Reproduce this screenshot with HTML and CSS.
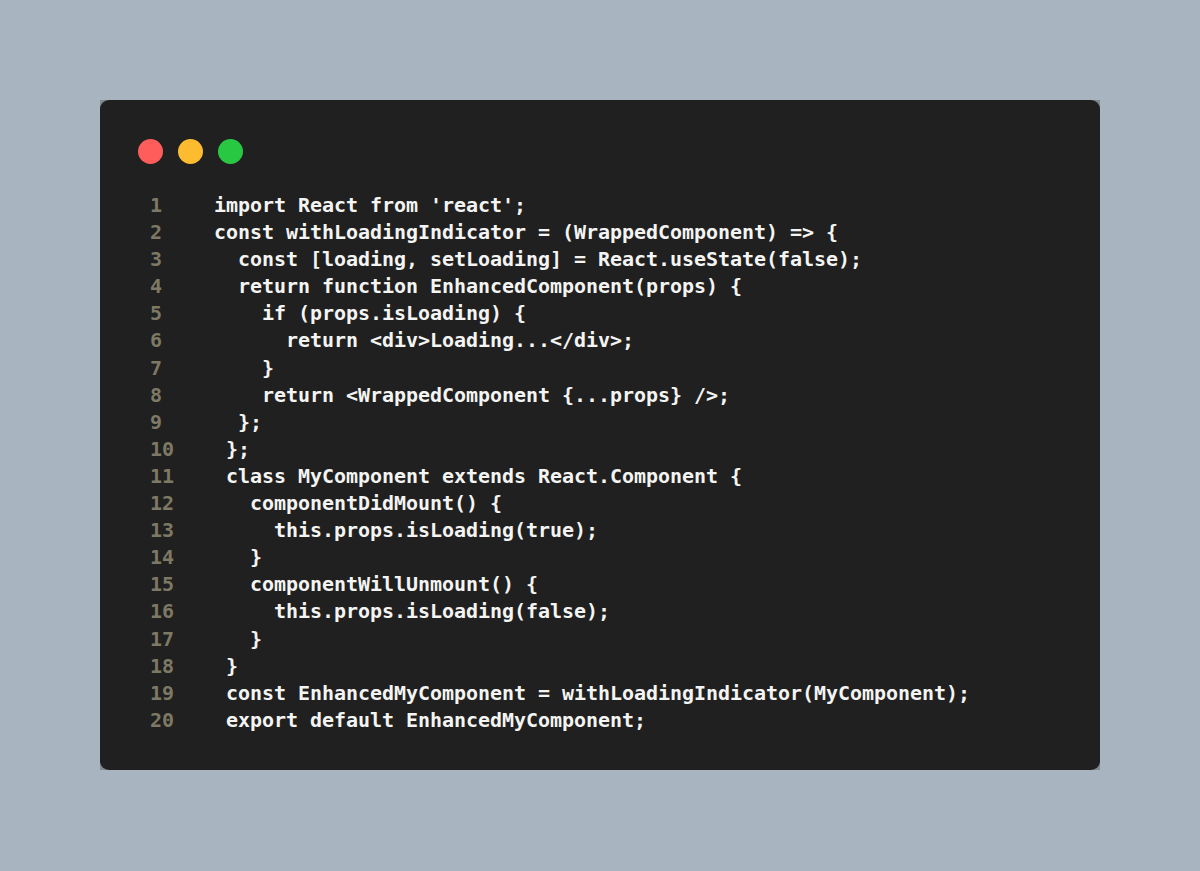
FILE: index.html
```html
<!DOCTYPE html>
<html>
<head>
<meta charset="utf-8">
<link rel="stylesheet" href="styles.css">
</head>
<body>
<div class="frame">
  <div class="card">
    <div class="dots">
      <span class="dot red"></span>
      <span class="dot yellow"></span>
      <span class="dot green"></span>
    </div>
    <div class="code">
      <div class="line"><span class="num">1</span><span class="src">import React from 'react';</span></div>
      <div class="line"><span class="num">2</span><span class="src">const withLoadingIndicator = (WrappedComponent) =&gt; {</span></div>
      <div class="line"><span class="num">3</span><span class="src">  const [loading, setLoading] = React.useState(false);</span></div>
      <div class="line"><span class="num">4</span><span class="src">  return function EnhancedComponent(props) {</span></div>
      <div class="line"><span class="num">5</span><span class="src">    if (props.isLoading) {</span></div>
      <div class="line"><span class="num">6</span><span class="src">      return &lt;div&gt;Loading...&lt;/div&gt;;</span></div>
      <div class="line"><span class="num">7</span><span class="src">    }</span></div>
      <div class="line"><span class="num">8</span><span class="src">    return &lt;WrappedComponent {...props} /&gt;;</span></div>
      <div class="line"><span class="num">9</span><span class="src">  };</span></div>
      <div class="line"><span class="num">10</span><span class="src">};</span></div>
      <div class="line"><span class="num">11</span><span class="src">class MyComponent extends React.Component {</span></div>
      <div class="line"><span class="num">12</span><span class="src">  componentDidMount() {</span></div>
      <div class="line"><span class="num">13</span><span class="src">    this.props.isLoading(true);</span></div>
      <div class="line"><span class="num">14</span><span class="src">  }</span></div>
      <div class="line"><span class="num">15</span><span class="src">  componentWillUnmount() {</span></div>
      <div class="line"><span class="num">16</span><span class="src">    this.props.isLoading(false);</span></div>
      <div class="line"><span class="num">17</span><span class="src">  }</span></div>
      <div class="line"><span class="num">18</span><span class="src">}</span></div>
      <div class="line"><span class="num">19</span><span class="src">const EnhancedMyComponent = withLoadingIndicator(MyComponent);</span></div>
      <div class="line"><span class="num">20</span><span class="src">export default EnhancedMyComponent;</span></div>
    </div>
  </div>
</div>
</body>
</html>
```
FILE: styles.css
```css
html, body {
  margin: 0;
  padding: 0;
}
body {
  background: #a8b4bf;
  width: 1200px;
  height: 871px;
  padding-top: 100px;
  box-sizing: border-box;
}
.frame {
  margin-left: 100px;
  width: 1000px;
  height: 670px;
  background: #7f878f;
}
.card {
  width: 1000px;
  height: 670px;
  box-sizing: border-box;
  background: #202020;
  border-radius: 9px;
  padding: 39px 0 0 38px;
}
.dots {
  display: flex;
  gap: 15px;
  height: 25px;
}
.dot {
  width: 25px;
  height: 25px;
  border-radius: 50%;
  display: block;
}
.red { background: #fe5d5b; }
.yellow { background: #fdbc30; }
.green { background: #29c843; }
.code {
  margin-top: 28px;
  padding-left: 12px;
  font-family: "DejaVu Sans Mono", "Liberation Mono", monospace;
  font-weight: bold;
  font-size: 20px;
  letter-spacing: -0.04px;
  line-height: 27.1px;
  color: #f4f4f2;
}
.line {
  display: flex;
  height: 27.1px;
}
.num {
  color: #7d7964;
  margin-right: 52px;
  white-space: pre;
}
.src {
  white-space: pre;
}
```
